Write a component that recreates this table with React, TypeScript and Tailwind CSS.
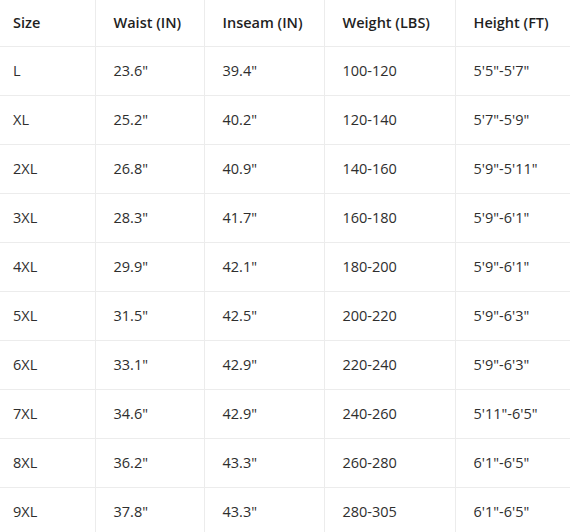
const headers = ['Size', 'Waist (IN)', 'Inseam (IN)', 'Weight (LBS)', 'Height (FT)'];

const rows = [
  ['L', '23.6"', '39.4"', '100-120', '5\'5"-5\'7"'],
  ['XL', '25.2"', '40.2"', '120-140', '5\'7"-5\'9"'],
  ['2XL', '26.8"', '40.9"', '140-160', '5\'9"-5\'11"'],
  ['3XL', '28.3"', '41.7"', '160-180', '5\'9"-6\'1"'],
  ['4XL', '29.9"', '42.1"', '180-200', '5\'9"-6\'1"'],
  ['5XL', '31.5"', '42.5"', '200-220', '5\'9"-6\'3"'],
  ['6XL', '33.1"', '42.9"', '220-240', '5\'9"-6\'3"'],
  ['7XL', '34.6"', '42.9"', '240-260', '5\'11"-6\'5"'],
  ['8XL', '36.2"', '43.3"', '260-280', '6\'1"-6\'5"'],
  ['9XL', '37.8"', '43.3"', '280-305', '6\'1"-6\'5"'],
];

const widths = ['w-[95px]', 'w-[109px]', 'w-[120px]', 'w-[131px]', 'w-[115px]'];

export default function App() {
  return (
    <div className="w-[570px] h-[532px] overflow-hidden bg-white font-['Open_Sans','Noto_Sans',sans-serif] text-[14.5px]">
      <table className="w-[570px] border-collapse table-fixed">
        <thead>
          <tr className="h-[46px]">
            {headers.map((h, i) => (
              <th
                key={h}
                className={`${widths[i]} text-left font-semibold text-[#1f1f1f] border-b border-[#ececec] ${i > 0 ? 'border-l pl-[18px]' : 'pl-[13px]'}`}
              >
                {h}
              </th>
            ))}
          </tr>
        </thead>
        <tbody>
          {rows.map((row) => (
            <tr key={row[0]} className="h-[49px]">
              {row.map((cell, i) => (
                <td
                  key={i}
                  className={`text-[#2e2e2e] border-b border-[#ececec] ${i > 0 ? 'border-l pl-[18px]' : 'pl-[13px]'}`}
                >
                  {cell}
                </td>
              ))}
            </tr>
          ))}
        </tbody>
      </table>
    </div>
  );
}
